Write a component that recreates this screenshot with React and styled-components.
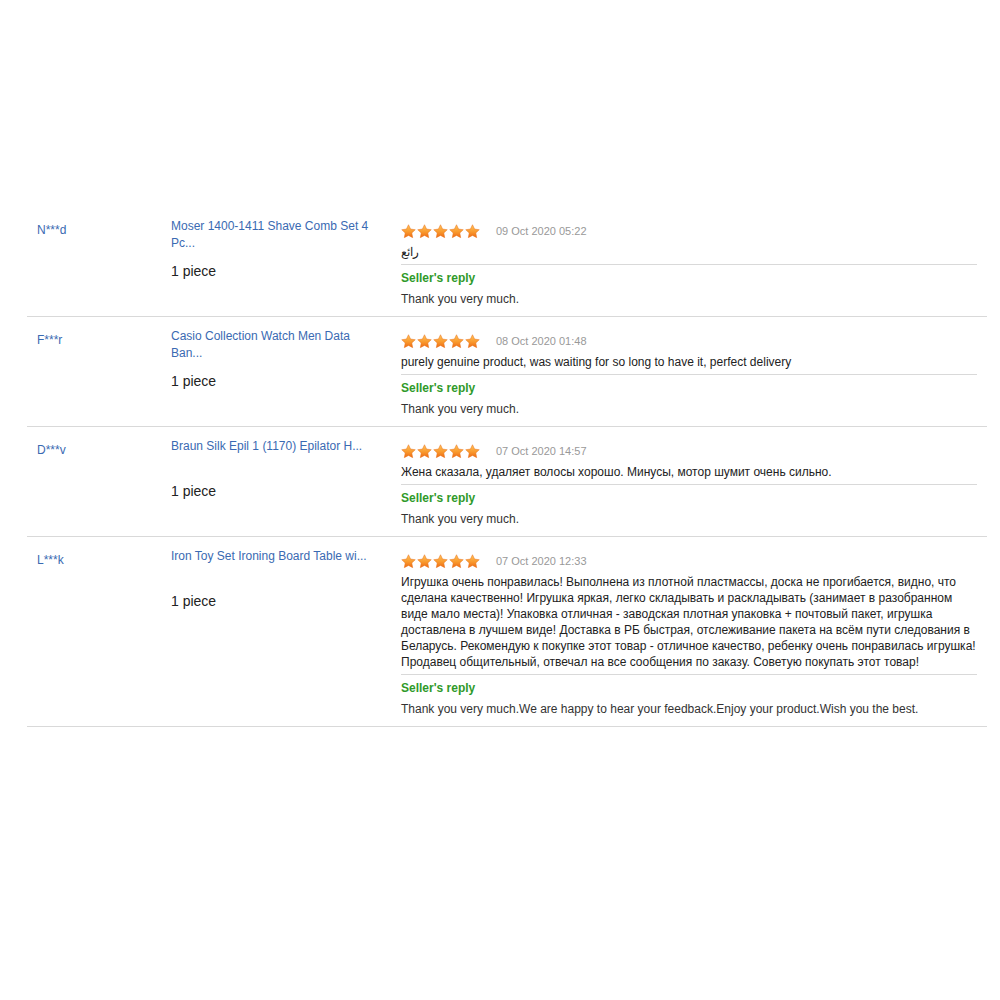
import React from 'react';
import styled, { createGlobalStyle } from 'styled-components';

const GlobalStyle = createGlobalStyle`
  body {
    margin: 0;
    background: #fff;
    font-family: "Liberation Sans", Arial, sans-serif;
    font-size: 12px;
    color: #333;
  }
`;

const List = styled.div`
  margin: 207px 0 0 27px;
  width: 960px;
`;

const Row = styled.div`
  display: grid;
  grid-template-columns: 144px 230px 576px;
  padding: 15px 0 9px;
  border-bottom: 1px solid #d9d9d9;
`;

const UserName = styled.div`
  padding-left: 10px;
  color: #3a6ab2;
  font-size: 12px;
  line-height: 16px;
`;

const Product = styled.div`
  margin-top: -4px;
`;

const ProductTitle = styled.a`
  display: block;
  width: 200px;
  height: 34px;
  color: #3a6ab2;
  font-size: 12px;
  line-height: 17px;
  text-decoration: none;
`;

const Quantity = styled.div`
  margin-top: 9px;
  font-size: 14px;
  line-height: 20px;
  color: #222;
`;

const Feedback = styled.div`
  display: flex;
  flex-direction: column;
`;

const Header = styled.div`
  display: flex;
  align-items: center;
  height: 18px;
  gap: 16px;
`;

const Stars = styled.div`
  display: flex;
  gap: 1px;
`;

const DateText = styled.span`
  font-size: 11px;
  color: #999;
`;

const Comment = styled.div`
  margin-top: 4px;
  padding-bottom: 4px;
  border-bottom: 1px solid #d9d9d9;
  font-size: 12px;
  line-height: 16px;
  color: #222;
`;

const ReplyLabel = styled.div`
  margin-top: 5px;
  font-size: 12px;
  line-height: 16px;
  font-weight: bold;
  color: #2f9a2a;
`;

const ReplyText = styled.div`
  margin-top: 5px;
  font-size: 12px;
  line-height: 16px;
  color: #333;
`;

function Star() {
  return (
    <svg width="15" height="15" viewBox="0 0 24 24">
      <defs>
        <linearGradient id="starFill" x1="0" y1="0" x2="0" y2="1">
          <stop offset="0" stopColor="#ffc25a" />
          <stop offset="0.55" stopColor="#f99a2e" />
          <stop offset="1" stopColor="#ee6a14" />
        </linearGradient>
      </defs>
      <path
        d="M12 1.2l3.3 6.9 7.5 1-5.5 5.2 1.4 7.5L12 18.2l-6.7 3.6 1.4-7.5L1.2 9.1l7.5-1z"
        fill="url(#starFill)"
        stroke="#e8731c"
        strokeWidth="0.8"
        strokeLinejoin="round"
      />
    </svg>
  );
}

const reviews = [
  {
    user: 'N***d',
    product: 'Moser 1400-1411 Shave Comb Set 4 Pc...',
    date: '09 Oct 2020 05:22',
    text: 'رائع',
    reply: 'Thank you very much.',
  },
  {
    user: 'F***r',
    product: 'Casio Collection Watch Men Data Ban...',
    date: '08 Oct 2020 01:48',
    text: 'purely genuine product, was waiting for so long to have it, perfect delivery',
    reply: 'Thank you very much.',
  },
  {
    user: 'D***v',
    product: 'Braun Silk Epil 1 (1170) Epilator H...',
    date: '07 Oct 2020 14:57',
    text: 'Жена сказала, удаляет волосы хорошо. Минусы, мотор шумит очень сильно.',
    reply: 'Thank you very much.',
  },
  {
    user: 'L***k',
    product: 'Iron Toy Set Ironing Board Table wi...',
    date: '07 Oct 2020 12:33',
    text:
      'Игрушка очень понравилась! Выполнена из плотной пластмассы, доска не прогибается, видно, что сделана качественно! Игрушка яркая, легко складывать и раскладывать (занимает в разобранном виде мало места)! Упаковка отличная - заводская плотная упаковка + почтовый пакет, игрушка доставлена в лучшем виде! Доставка в РБ быстрая, отслеживание пакета на всём пути следования в Беларусь. Рекомендую к покупке этот товар - отличное качество, ребенку очень понравилась игрушка! Продавец общительный, отвечал на все сообщения по заказу. Советую покупать этот товар!',
    reply:
      'Thank you very much.We are happy to hear your feedback.Enjoy your product.Wish you the best.',
  },
];

export default function App() {
  return (
    <>
      <GlobalStyle />
      <List>
        {reviews.map((r) => (
          <Row key={r.user}>
            <UserName>{r.user}</UserName>
            <Product>
              <ProductTitle href="#">{r.product}</ProductTitle>
              <Quantity>1 piece</Quantity>
            </Product>
            <Feedback>
              <Header>
                <Stars>
                  {[0, 1, 2, 3, 4].map((i) => (
                    <Star key={i} />
                  ))}
                </Stars>
                <DateText>{r.date}</DateText>
              </Header>
              <Comment>{r.text}</Comment>
              <ReplyLabel>Seller's reply</ReplyLabel>
              <ReplyText>{r.reply}</ReplyText>
            </Feedback>
          </Row>
        ))}
      </List>
    </>
  );
}
